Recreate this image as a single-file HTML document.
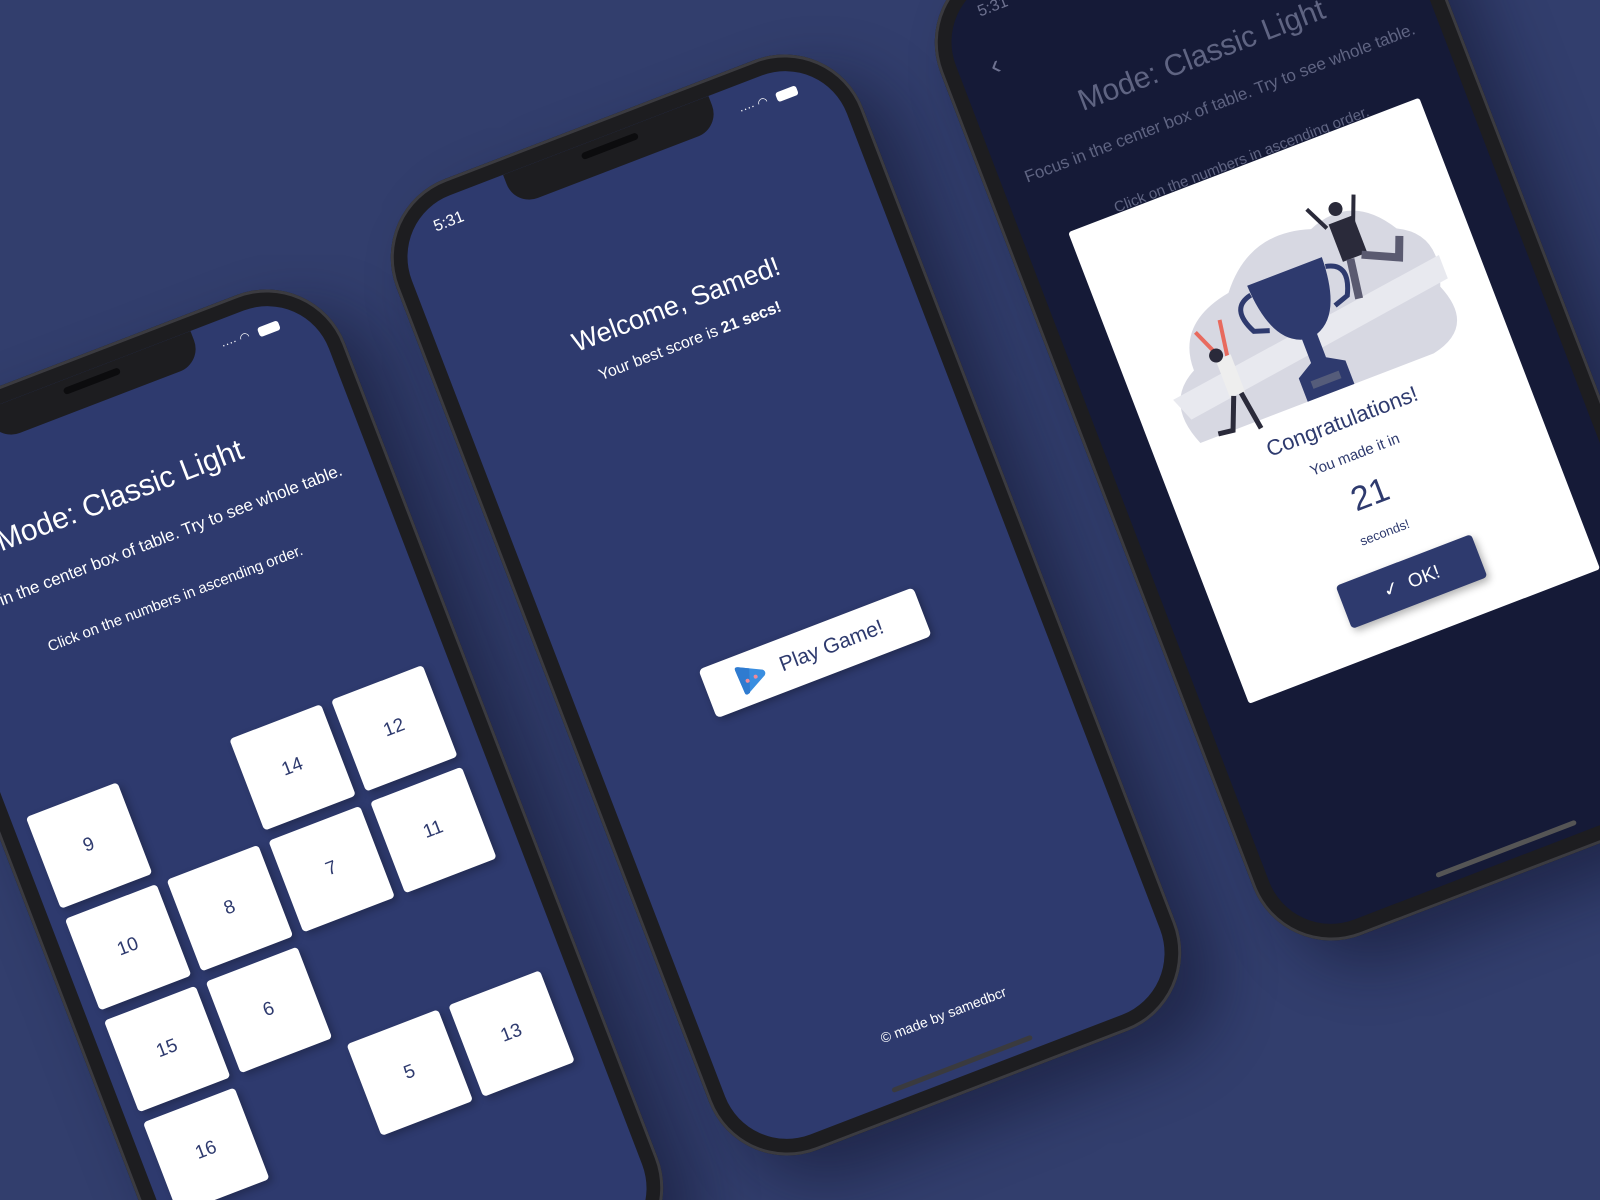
<!DOCTYPE html>
<html style="width:1600px;height:1200px;overflow:hidden"><head><meta charset="utf-8"><style>
*{margin:0;padding:0;box-sizing:border-box}
body{width:1600px;height:1200px;overflow:hidden;background:#323e6d;font-family:"Liberation Sans",sans-serif}
#wrap{position:relative;width:1600px;height:1200px;overflow:hidden}
.phone{position:absolute;width:500px;height:1040px;border-radius:84px;background:#1d1d20;transform:rotate(-21deg);box-shadow:25px 35px 60px rgba(10,14,35,.45),inset 0 0 0 3px #3b3b40}
.screen{position:absolute;left:17px;top:17px;right:17px;bottom:17px;border-radius:66px;background:#2e3a6e;overflow:hidden}
.notch{position:absolute;left:50%;top:0;width:220px;height:34px;margin-left:-110px;background:#1d1d20;border-radius:0 0 24px 24px}
.notch:after{content:"";position:absolute;left:80px;top:8px;width:60px;height:7px;border-radius:4px;background:#0c0c0e}
.time{position:absolute;left:40px;top:16px;color:#fff;font-size:16px}
.stat{position:absolute;right:38px;top:18px;color:#fff;font-size:12px}
.bat{display:inline-block;width:22px;height:10px;background:#fff;border-radius:3px;vertical-align:middle;margin-left:6px}
.c{position:absolute;left:0;right:0;text-align:center;color:#fff}
.tile{position:absolute;width:98px;height:98px;background:#fff;border-radius:4px;color:#2e3a6e;font-size:19px;display:flex;align-items:center;justify-content:center;box-shadow:3px 4px 8px rgba(0,0,0,.25)}
.bar{position:absolute;left:50%;bottom:9px;width:150px;margin-left:-75px;height:5px;border-radius:3px;background:#3a3a3e}
</style></head><body><div id="wrap">

<!-- left phone -->
<div class="phone" style="left:18px;top:320px">
 <div class="screen">
  <div class="notch"></div>
  <div class="stat">···· ◠ <span class="bat"></span></div>
  <div class="c" style="top:112px;font-size:30px;padding-right:30px">Mode: Classic Light</div>
  <div class="c" style="top:172px;font-size:17px;line-height:23px;padding:0 24px 0 10px">Focus in the center box of table. Try to see whole table.</div>
  <div class="c" style="top:236px;font-size:15px">Click on the numbers in ascending order.</div>
  <div style="position:absolute;left:50%;top:613px;width:0;height:0">
   <div class="tile" style="left:-218px;top:-218px">9</div>
   <div class="tile" style="left:0px;top:-218px">14</div>
   <div class="tile" style="left:109px;top:-218px">12</div>
   <div class="tile" style="left:-218px;top:-109px">10</div>
   <div class="tile" style="left:-109px;top:-109px">8</div>
   <div class="tile" style="left:0px;top:-109px">7</div>
   <div class="tile" style="left:109px;top:-109px">11</div>
   <div class="tile" style="left:-218px;top:0px">15</div>
   <div class="tile" style="left:-109px;top:0px">6</div>
   <div class="tile" style="left:-218px;top:109px">16</div>
   <div class="tile" style="left:0px;top:109px">5</div>
   <div class="tile" style="left:109px;top:109px">13</div>
  </div>
 </div>
</div>

<!-- middle phone -->
<div class="phone" style="left:536px;top:85px">
 <div class="screen">
  <div class="notch"></div>
  <div class="time">5:31</div>
  <div class="stat">···· ◠ <span class="bat"></span></div>
  <div class="c" style="top:168px;font-size:27px;padding-left:10px">Welcome, Samed!</div>
  <div class="c" style="top:214px;font-size:16px;padding-left:10px">Your best score is <b>21 secs!</b></div>
  <div style="position:absolute;left:50%;top:532px;width:230px;height:52px;margin-left:-105px;background:#fff;border-radius:5px;box-shadow:2px 3px 8px rgba(0,0,0,.3);display:flex;align-items:center;padding-left:30px;color:#2e3a6e;font-size:21px">
   <svg width="34" height="34" viewBox="0 0 34 34" style="margin-right:14px"><path d="M4 5 Q4 1 8 3 L30 14 Q33 17 30 20 L9 31 Q5 33 5 29Z" fill="#3a8ee0"/><path d="M4 5 Q4 1 8 3 L18 8 L10 31 Q5 33 5 29Z" fill="#2f7bd0"/><circle cx="12" cy="19" r="2" fill="#f08a9a"/><circle cx="21" cy="18" r="2" fill="#f08a9a"/></svg>
   Play Game!
  </div>
  <div class="c" style="bottom:56px;font-size:14px">© made by samedbcr</div>
  <div class="bar"></div>
 </div>
</div>

<!-- right phone -->
<div class="phone" style="left:1080px;top:-130px">
 <div class="screen" style="background:#151a37">
  <div class="notch"></div>
  <div class="time" style="color:#6e7290">5:31</div>
  <div style="position:absolute;left:32px;top:64px;color:#6e7290;font-size:28px">‹</div>
  <div class="c" style="top:128px;font-size:30px;color:#5f6482">Mode: Classic Light</div>
  <div class="c" style="top:184px;font-size:17px;line-height:23px;padding:0 24px;color:#5f6482">Focus in the center box of table. Try to see whole table.</div>
  <div class="c" style="top:248px;font-size:15px;color:#5f6482">Click on the numbers in ascending order.</div>
  <div style="position:absolute;left:50%;top:262px;width:376px;height:505px;margin-left:-188px;background:#fff;border-radius:3px">
   <svg style="position:absolute;left:28px;top:44px" width="320" height="220" viewBox="0 0 320 220">
    <path d="M20 200 Q0 150 40 130 Q40 80 100 70 Q140 20 200 40 Q250 20 280 70 Q320 90 300 140 Q320 190 270 200Z" fill="#d7d8e2"/>
    <path d="M10 150 L310 110 L310 135 L20 175Z" fill="#e8e9ef"/>
    <path d="M120 70 L200 70 Q198 130 168 140 L168 165 L185 175 L185 200 L135 200 L135 175 L152 165 L152 140 Q122 130 120 70Z" fill="#2e3a6e"/>
    <path d="M120 80 Q95 85 110 115 L125 120 M200 80 Q225 85 210 115 L195 120" stroke="#2e3a6e" stroke-width="5" fill="none"/>
    <rect x="145" y="182" width="30" height="8" fill="#555c7a"/>
    <path d="M70 130 L55 95 M76 130 L82 92" stroke="#e86a5e" stroke-width="4" fill="none"/>
    <path d="M64 128 h16 v40 h-16z" fill="#eee"/>
    <path d="M68 168 L55 200 L40 198 M76 168 L82 208" stroke="#2a2a3a" stroke-width="5" fill="none"/>
    <circle cx="66" cy="124" r="7" fill="#2a2a3a"/>
    <path d="M215 45 l-12 -25 M242 48 l10 -25" stroke="#2a2a3a" stroke-width="4" fill="none"/>
    <path d="M218 42 h26 v40 h-26z" fill="#2a2a3a"/>
    <path d="M226 82 l-6 40 M238 82 l34 16 l8 -20" stroke="#5a5a70" stroke-width="8" fill="none"/>
    <circle cx="230" cy="30" r="7" fill="#2a2a3a"/>
   </svg>
   <div class="c" style="top:262px;font-size:22px;color:#2e3a6e">Congratulations!</div>
   <div class="c" style="top:302px;font-size:15px;color:#2e3a6e">You made it in</div>
   <div class="c" style="top:334px;font-size:34px;color:#2e3a6e">21</div>
   <div class="c" style="top:386px;font-size:13px;color:#2e3a6e">seconds!</div>
   <div style="position:absolute;left:123px;top:426px;width:145px;height:46px;background:#2e3a6e;border-radius:4px;color:#fff;font-size:19px;display:flex;align-items:center;justify-content:center;box-shadow:2px 4px 8px rgba(0,0,0,.3)">✓&nbsp;&nbsp;OK!</div>
  </div>
  <div class="bar" style="background:#555"></div>
 </div>
</div>
</div></body></html>
